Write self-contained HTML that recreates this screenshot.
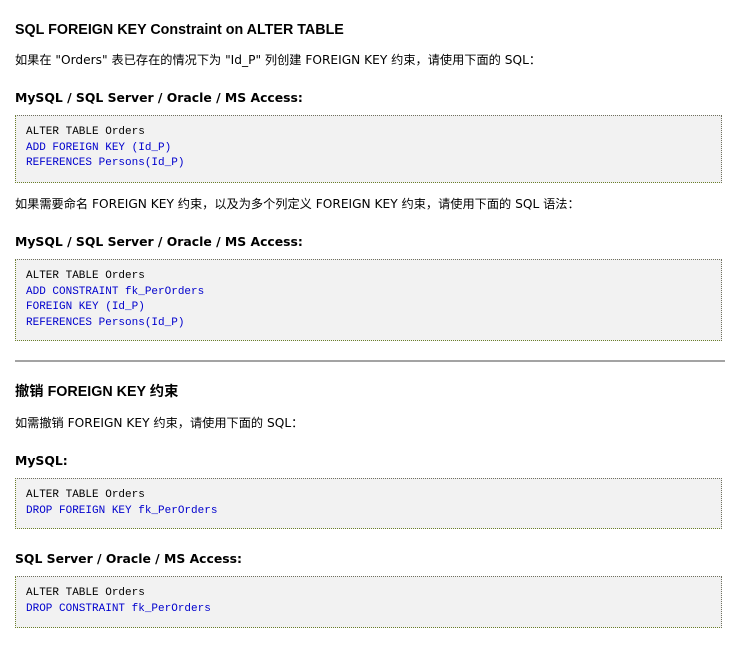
<!DOCTYPE html>
<html><head><meta charset="utf-8"><style>
body{margin:0;width:740px;height:646px;background:#fff;position:relative;overflow:hidden;font-family:"DejaVu Sans","Liberation Sans","Noto Sans CJK SC",sans-serif;color:#000}
.a{position:absolute;left:15px;white-space:nowrap}
h2{margin:0;font-family:"Liberation Sans","Noto Sans CJK SC",sans-serif;font-size:14.3px;font-weight:bold;line-height:18px}
h3{margin:0;font-size:12.4px;font-weight:bold;line-height:16px}
p{margin:0;font-size:12.2px;line-height:16px}
.box{position:absolute;left:15px;width:705px;background:#f2f2f2;border:1px dotted #707060;border-bottom-color:#6b7f2a;border-left-color:#6b7f2a}
.c{position:absolute;left:10px;font-family:"Liberation Mono",monospace;font-size:11px;line-height:15.5px;white-space:pre}
.b{color:#0000cd}
.hr{position:absolute;left:15px;width:710px;top:360px;height:2px;background:#a3a3a3}
</style></head><body>
<h2 class="a" style="top:21px">SQL FOREIGN KEY Constraint on ALTER TABLE</h2>
<p class="a" style="top:52px">如果在 "Orders" 表已存在的情况下为 "Id_P" 列创建 FOREIGN KEY 约束，请使用下面的 SQL：</p>
<h3 class="a" style="top:90px">MySQL / SQL Server / Oracle / MS Access:</h3>
<div class="box" style="top:115px;height:66px"><div class="c" style="top:9px">ALTER TABLE Orders
<span class="b">ADD FOREIGN KEY (Id_P)
REFERENCES Persons(Id_P)</span></div></div>
<p class="a" style="top:196px">如果需要命名 FOREIGN KEY 约束，以及为多个列定义 FOREIGN KEY 约束，请使用下面的 SQL 语法：</p>
<h3 class="a" style="top:234px">MySQL / SQL Server / Oracle / MS Access:</h3>
<div class="box" style="top:259px;height:80px"><div class="c" style="top:9px">ALTER TABLE Orders
<span class="b">ADD CONSTRAINT fk_PerOrders
FOREIGN KEY (Id_P)
REFERENCES Persons(Id_P)</span></div></div>
<div class="hr"></div>
<h2 class="a" style="top:383px">撤销 FOREIGN KEY 约束</h2>
<p class="a" style="top:415px">如需撤销 FOREIGN KEY 约束，请使用下面的 SQL：</p>
<h3 class="a" style="top:453px">MySQL:</h3>
<div class="box" style="top:478px;height:49px"><div class="c" style="top:9px">ALTER TABLE Orders
<span class="b">DROP FOREIGN KEY fk_PerOrders</span></div></div>
<h3 class="a" style="top:551px">SQL Server / Oracle / MS Access:</h3>
<div class="box" style="top:576px;height:50px"><div class="c" style="top:9px">ALTER TABLE Orders
<span class="b">DROP CONSTRAINT fk_PerOrders</span></div></div>
</body></html>
